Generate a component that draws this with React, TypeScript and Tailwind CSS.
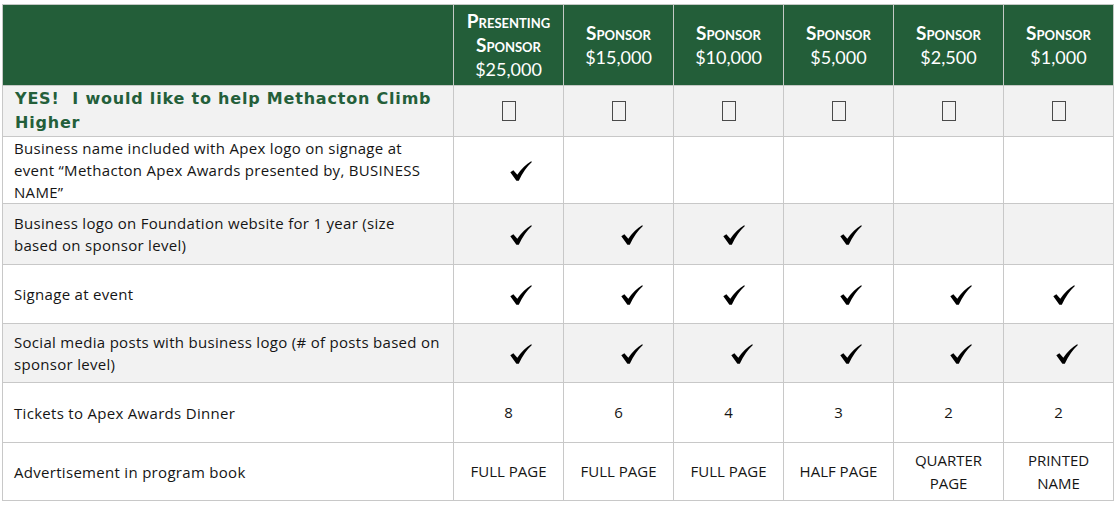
import React from "react";

const GREEN = "bg-[#235e39]";

function Check() {
  return (
    <svg width="22" height="20" viewBox="0 0 21 19" className="inline-block">
      <path
        d="M0.3 10.8 L3.2 8.7 L7 13 Q12.5 4.8 20.2 0.1 L20.9 0.9 Q13.6 7.6 8.4 18.7 L6.1 18.9 Z"
        fill="#000"
      />
    </svg>
  );
}

function Box() {
  return <div className="mx-auto w-[14px] h-[20px] border border-[#4a4a4a] bg-transparent" />;
}

type Cell = { v: React.ReactNode; cls?: string };

const headers = [
  { top: "Presenting", mid: "Sponsor", amt: "$25,000" },
  { mid: "Sponsor", amt: "$15,000" },
  { mid: "Sponsor", amt: "$10,000" },
  { mid: "Sponsor", amt: "$5,000" },
  { mid: "Sponsor", amt: "$2,500" },
  { mid: "Sponsor", amt: "$1,000" },
];

export default function App() {
  const ck = (cls: string): Cell => ({ v: <Check />, cls });
  const empty: Cell = { v: null };

  const rows: { label: React.ReactNode; h: string; bg: string; cells: Cell[] }[] = [
    {
      label: (
        <>
          Business name included with Apex logo on signage at
          <br />
          event “Methacton Apex Awards presented by, BUSINESS
          <br />
          NAME”
        </>
      ),
      h: "h-[67px]",
      bg: "bg-white",
      cells: [ck("pl-[24px]"), empty, empty, empty, empty, empty],
    },
    {
      label: (
        <>
          Business logo on Foundation website for 1 year (size
          <br />
          based on sponsor level)
        </>
      ),
      h: "h-[61px]",
      bg: "bg-[#f2f2f2]",
      cells: [ck("pl-[24px]"), ck("pl-[26px]"), ck("pl-[10px]"), ck("pl-[24px]"), empty, empty],
    },
    {
      label: <>Signage at event</>,
      h: "h-[59px]",
      bg: "bg-white",
      cells: [ck("pl-[24px]"), ck("pl-[26px]"), ck("pl-[10px]"), ck("pl-[24px]"), ck("pl-[24px]"), ck("pl-[10px]")],
    },
    {
      label: (
        <>
          Social media posts with business logo (# of posts based on
          <br />
          sponsor level)
        </>
      ),
      h: "h-[59px]",
      bg: "bg-[#f2f2f2]",
      cells: [ck("pl-[24px]"), ck("pl-[26px]"), ck("pl-[26px]"), ck("pl-[24px]"), ck("pl-[24px]"), ck("pl-[16px]")],
    },
    {
      label: <>Tickets to Apex Awards Dinner</>,
      h: "h-[60px]",
      bg: "bg-white",
      cells: ["8", "6", "4", "3", "2", "2"].map((n) => ({ v: n })),
    },
    {
      label: <>Advertisement in program book</>,
      h: "h-[58px]",
      bg: "bg-white",
      cells: [
        { v: "FULL PAGE" },
        { v: "FULL PAGE" },
        { v: "FULL PAGE" },
        { v: "HALF PAGE" },
        {
          v: (
            <>
              QUARTER
              <br />
              PAGE
            </>
          ),
        },
        {
          v: (
            <>
              PRINTED
              <br />
              NAME
            </>
          ),
        },
      ],
    },
  ];

  return (
    <div className="w-[1116px] h-[505px] bg-white pt-[4px] pl-[2px] overflow-hidden font-['Open_Sans',sans-serif] text-[#151515]">
      <table className="table-fixed border-collapse w-[1111px]">
        <colgroup>
          <col className="w-[451px]" />
          <col className="w-[110px]" />
          <col className="w-[110px]" />
          <col className="w-[110px]" />
          <col className="w-[110px]" />
          <col className="w-[110px]" />
          <col className="w-[110px]" />
        </colgroup>
        <tbody>
          <tr className="h-[81px]">
            <td className={`${GREEN} border border-[#c4c9c5]`} />
            {headers.map((h, i) => (
              <td
                key={i}
                className={`${GREEN} border border-[#c4c9c5] text-center align-middle text-white leading-[24px] font-['Lato',sans-serif]`}
              >
                {h.top && <div className="text-[19px] font-bold [font-variant:small-caps]">{h.top}</div>}
                <div className="text-[19px] font-bold [font-variant:small-caps]">{h.mid}</div>
                <div className="text-[18px]">{h.amt}</div>
              </td>
            ))}
          </tr>
          <tr className="h-[51px] bg-[#f2f2f2]">
            <td className="border border-[#c8c8c8] pl-[12px] align-middle font-['DejaVu_Sans',sans-serif] font-bold text-[16px] tracking-[0.8px] leading-[24px] text-[#245f3a]">
              YES!&nbsp; I would like to help Methacton Climb
              <br />
              Higher
            </td>
            {[0, 1, 2, 3, 4, 5].map((i) => (
              <td key={i} className="border border-[#c8c8c8] align-middle text-center">
                <Box />
              </td>
            ))}
          </tr>
          {rows.map((r, ri) => (
            <tr key={ri} className={`${r.h} ${r.bg}`}>
              <td className="border border-[#c8c8c8] pl-[11px] align-middle text-[15px] tracking-[0.3px] leading-[22px]">
                {r.label}
              </td>
              {r.cells.map((c, ci) => (
                <td
                  key={ci}
                  className={`border border-[#c8c8c8] align-middle text-center text-[15px] leading-[23px] ${c.cls ?? ""}`}
                >
                  {c.v}
                </td>
              ))}
            </tr>
          ))}
        </tbody>
      </table>
    </div>
  );
}
